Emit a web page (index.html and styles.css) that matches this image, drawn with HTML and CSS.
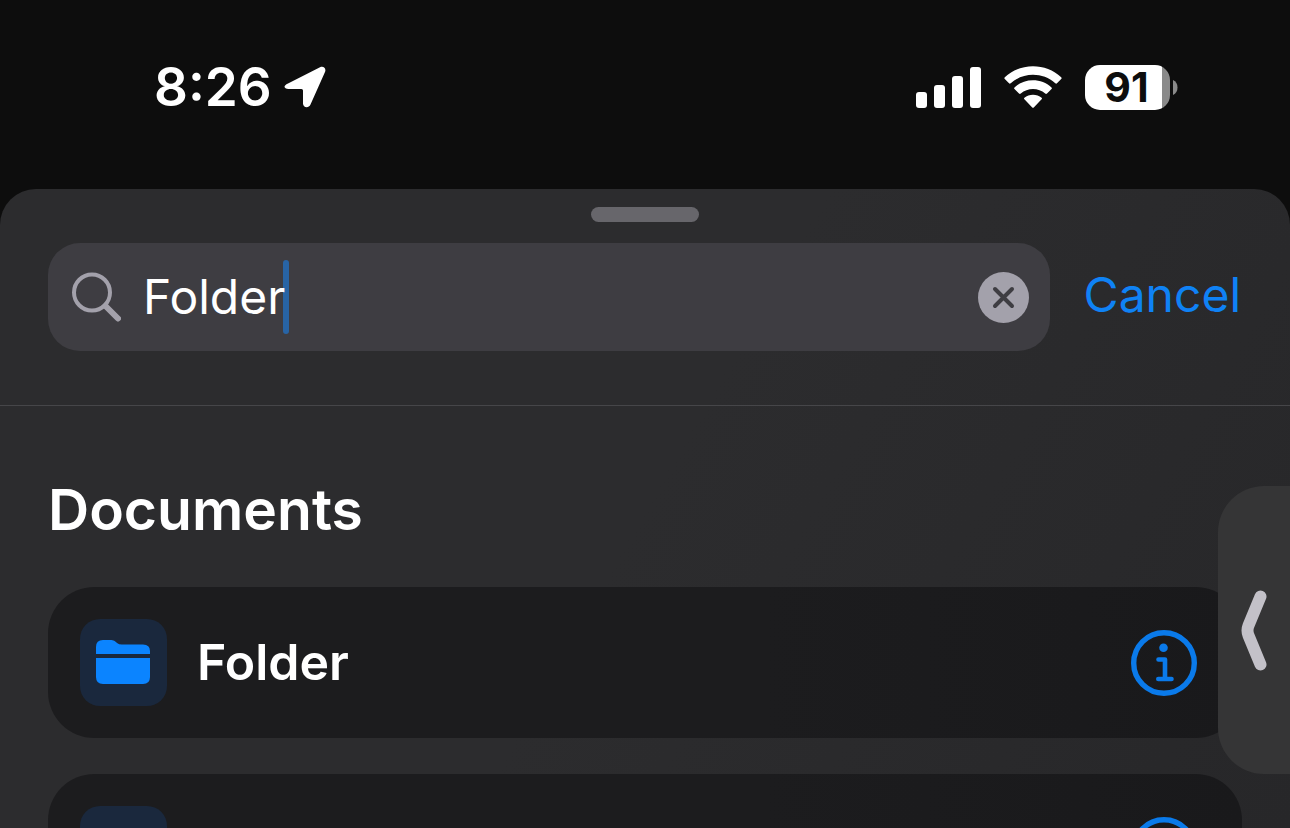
FILE: index.html
```html
<!DOCTYPE html>
<html lang="en">
<head>
    <meta charset="UTF-8">
    <meta name="viewport" content="width=device-width, initial-scale=1.0">
    <title>Documents</title>
    <link rel="stylesheet" href="styles.css">
</head>
<body>

    <header class="status-bar">
        <div class="status-left">
            <span class="time">8:26</span>
            <svg class="location" width="42" height="42" viewBox="0 0 42 42" aria-hidden="true">
                <path d="M4 17.500L36 1.200C39.500 -.4 42.500 2.400 41 6L26.500 38.500C24.800 42.600 19 41.800 19 37.500V24.500Q19 23 17.500 23H4.500C-.2 23 -1.200 19.800 4 17.500Z" fill="#fff"/>
            </svg>
        </div>
        <div class="status-right">
            <svg width="65" height="41" viewBox="0 0 65 41" fill="#fff" aria-hidden="true">
                <rect x="0" y="25" width="11" height="16" rx="3"/>
                <rect x="18" y="18" width="11" height="23" rx="3"/>
                <rect x="36" y="9" width="11" height="32" rx="3"/>
                <rect x="54" y="0" width="11" height="41" rx="3"/>
            </svg>
            <svg width="58" height="42" viewBox="0 0 58 42" fill="#fff" aria-hidden="true">
                <path d="M.8 11.300C16 -3.500 42 -3.500 57.200 11.300Q58 12.200 57.200 13L53 17.300Q52.200 18.100 51.300 17.300C39 6 19 6 6.700 17.300Q5.800 18.100 5 17.300L.8 13Q0 12.200 .8 11.300Z"/>
                <path d="M10.500 21.400C20.500 11.900 37.500 11.900 47.500 21.400Q48.300 22.200 47.500 23L43 27.600Q42.100 28.400 41.200 27.600C34.500 21.400 23.500 21.400 16.800 27.600Q15.900 28.400 15 27.600L10.500 23Q9.700 22.200 10.500 21.400Z"/>
                <path d="M20.400 31.700C25 27.600 33 27.600 37.600 31.700Q38.400 32.500 37.600 33.300L30 41.200Q29 42.200 28 41.200L20.400 33.300Q19.600 32.500 20.400 31.700Z"/>
            </svg>
            <div class="battery">
                <span class="battery-level">91</span>
                <svg width="5" height="15" viewBox="0 0 5 15" aria-hidden="true">
                    <path d="M0 0C6 2 6 13 0 15Z" fill="#8a8a8a"/>
                </svg>
            </div>
        </div>
    </header>

    <main class="sheet">
        <div class="grabber"></div>

        <form class="search-row">
            <div class="search-field">
                <svg width="49" height="50" viewBox="0 0 49 50" fill="none" stroke="#a3a1ab" aria-hidden="true">
                    <circle cx="20" cy="20.500" r="18" stroke-width="4"/>
                    <path d="M33.500 34L46 46.500" stroke-width="6" stroke-linecap="round"/>
                </svg>
                <span class="caret"></span>
                <input class="search-input" type="text" value="Folder" aria-label="Search">
                <button class="clear-btn" type="button" aria-label="Clear text">
                    <svg width="51" height="51" viewBox="0 0 51 51">
                        <circle cx="25.500" cy="25.500" r="25.500" fill="#a3a1ab"/>
                        <path d="M17 17L34 34M34 17L17 34" stroke="#3e3d42" stroke-width="4" stroke-linecap="round"/>
                    </svg>
                </button>
            </div>
            <button class="cancel-btn" type="button">Cancel</button>
        </form>

        <section class="results">
            <h2>Documents</h2>

            <div class="card">
                <div class="thumb">
                    <svg width="55" height="45" viewBox="0 0 55 45" fill="#0b84ff" aria-hidden="true">
                        <path d="M0 14V7Q0 0 7 0H14C18 0 19 1 21 3Q23 4.500 26 4.500H47Q54 4.500 54 11V14Z"/>
                        <path d="M0 18H54V37Q54 44 47 44H7Q0 44 0 37Z"/>
                    </svg>
                </div>
                <span class="name">Folder</span>
                <button class="info-btn" type="button" aria-label="Folder info">
                    <svg width="66" height="66" viewBox="0 0 66 66" fill="none" stroke="#0a7aea" stroke-linecap="round" stroke-linejoin="round">
                        <circle cx="33" cy="33" r="30.300" stroke-width="5.400"/>
                        <circle cx="32.500" cy="17.700" r="4.300" fill="#0a7aea" stroke="none"/>
                        <path d="M27.500 29.500H34V49M27.300 49H40.500" stroke-width="4.600"/>
                    </svg>
                </button>
            </div>

            <div class="card">
                <div class="thumb"></div>
                <button class="info-btn" type="button" aria-label="Item info">
                    <svg width="66" height="66" viewBox="0 0 66 66" fill="none" stroke="#0a7aea" stroke-linecap="round" stroke-linejoin="round">
                        <circle cx="33" cy="33" r="30.300" stroke-width="5.400"/>
                        <circle cx="32.500" cy="17.700" r="4.300" fill="#0a7aea" stroke="none"/>
                        <path d="M27.500 29.500H34V49M27.300 49H40.500" stroke-width="4.600"/>
                    </svg>
                </button>
            </div>
        </section>
    </main>

    <button class="side-tab" type="button" aria-label="Open side panel">
        <svg width="26" height="81" viewBox="0 0 26 81" fill="none" aria-hidden="true">
            <path d="M19.500 6.500L7.500 35.500Q5.500 40.500 7.500 45.500L19.500 74.500" stroke="#c3c1c8" stroke-width="12" stroke-linecap="round" stroke-linejoin="round"/>
        </svg>
    </button>

</body>
</html>
```
FILE: styles.css
```css
* {
    box-sizing: border-box;
}

body {
    display: flex;
    flex-direction: column;
    height: 100vh;
    margin: 0;
    overflow: hidden;
    background-color: #0d0d0d;
    color: white;
    font-family: Inter, "Liberation Sans", sans-serif;
}

button {
    padding: 0;
    border: none;
    background: none;
    font-family: inherit;
    cursor: pointer;
}

svg {
    display: block;
    flex-shrink: 0;
}

.status-bar {
    display: flex;
    justify-content: space-between;
    align-items: center;
    padding: 54px 112px 69px 154px;
}

.status-left {
    display: flex;
    align-items: center;
    gap: 12px;
}

.time {
    font-size: 53px;
    font-weight: 600;
    line-height: 66px;
}

.status-right {
    display: flex;
    align-items: center;
    gap: 23px;
}

.battery {
    display: flex;
    align-items: center;
    gap: 3px;
}

.battery-level {
    width: 85px;
    padding-right: 2px;
    border-radius: 15px;
    background: linear-gradient(to right, white 91%, #8a8a8a 91%);
    color: #0d0d0d;
    font-size: 41px;
    font-weight: 700;
    line-height: 45px;
    text-align: center;
}

.sheet {
    flex: 1;
    min-height: 0;
    overflow: hidden;
    border-radius: 36px 36px 0 0;
    background: linear-gradient(120deg, #2c2c2e 50%, #272729);
}

.grabber {
    width: 108px;
    height: 15px;
    margin: 18px auto 21px;
    border-radius: 8px;
    background-color: #67666b;
}

.search-row {
    display: flex;
    align-items: center;
    gap: 34px;
    padding: 0 49px 54px 48px;
    border-bottom: 1px solid #464649;
}

.search-field {
    position: relative;
    display: flex;
    flex: 1;
    align-items: center;
    min-width: 0;
    height: 108px;
    padding: 0 21px 0 24px;
    border-radius: 32px;
    background-color: #3e3d42;
}

.search-input {
    position: relative;
    flex: 1;
    min-width: 0;
    padding: 0 20px 0 22px;
    border: none;
    outline: none;
    background: none;
    color: white;
    font-family: inherit;
    font-size: 48px;
    line-height: 60px;
}

.caret {
    position: absolute;
    top: 17px;
    left: 235px;
    width: 6px;
    height: 74px;
    border-radius: 3px;
    background-color: #2864a5;
}

.cancel-btn {
    padding-bottom: 4px;
    color: #0f82f5;
    font-size: 48px;
    line-height: 60px;
}

.results {
    display: flex;
    flex-direction: column;
    gap: 36px;
    padding: 68px 48px 0;
}

h2 {
    margin: 0 0 6px;
    font-size: 57px;
    font-weight: 600;
    line-height: 71px;
}

.card {
    display: flex;
    align-items: center;
    gap: 30px;
    padding: 32px 45px 32px 32px;
    border-radius: 46px;
    background: linear-gradient(to right, #1c1c1e 60%, #19191b);
}

.thumb {
    display: flex;
    justify-content: center;
    align-items: center;
    width: 87px;
    height: 87px;
    border-radius: 20px;
    background-color: #1a283d;
}

.name {
    padding-bottom: 2px;
    font-size: 50px;
    font-weight: 600;
    line-height: 60px;
}

.info-btn {
    margin-left: auto;
}

/* floats over the right edge of the list */
.side-tab {
    position: fixed;
    top: 486px;
    right: 0;
    display: flex;
    justify-content: center;
    align-items: center;
    width: 72px;
    height: 288px;
    border-radius: 46px 0 0 46px;
    background-color: #353536;
}
```
